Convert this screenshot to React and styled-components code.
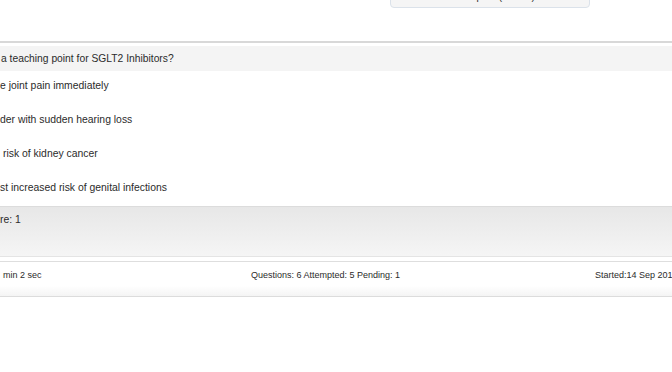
import React from "react";
import styled, { createGlobalStyle } from "styled-components";

const Global = createGlobalStyle`
  html, body { margin: 0; padding: 0; background: #fff; }
  body { font-family: "Liberation Sans", Arial, sans-serif; color: #2b2b2b; }
`;

const Page = styled.div`
  width: 672px;
  height: 372px;
  overflow: hidden;
  background: #fff;
`;

const TopArea = styled.div`
  display: flex;
  align-items: flex-start;
  height: 41px;
  border-bottom: 2px solid #d8d8d8;
  box-sizing: content-box;
`;

const TimerBox = styled.div`
  margin: -14px 0 0 390px;
  width: 198px;
  padding: 4px 0;
  background: #f5f5f5;
  border: 1px solid #dbe2ea;
  border-radius: 4px;
  font-size: 10px;
  line-height: 12px;
  text-align: center;
`;

const QuestionBar = styled.div`
  margin-top: 3px;
  height: 25px;
  background: #f4f4f4;
  display: flex;
  align-items: center;
  padding-left: 1px;
  font-size: 10.3px;
  line-height: 12px;
`;

const OptionList = styled.div`
  display: flex;
  flex-direction: column;
`;

const Option = styled.div`
  height: 34px;
  box-sizing: border-box;
  padding: 9px 0 13px ${(p) => p.$indent || 0}px;
  font-size: 10.4px;
  line-height: 12px;
  white-space: nowrap;
`;

const ScorePanel = styled.div`
  height: 42px;
  border-top: 1px solid #dcdcdc;
  border-bottom: 1px solid #e4e4e4;
  background: linear-gradient(#e7e7e7, #f5f5f5);
  padding: 7px 0 0 0;
  box-sizing: content-box;
  font-size: 10.4px;
  line-height: 12px;
  margin-top: -1px;
`;

const Footer = styled.div`
  margin-top: 4px;
  height: 36px;
  border-top: 1px solid #dedede;
  border-bottom: 1px solid #dcdcdc;
  background: linear-gradient(#fff 0%, #fff 70%, #f4f4f4 100%);
  display: grid;
  grid-template-columns: 248px 344px 1fr;
  align-items: start;
  padding: 8px 0 0 3px;
  box-sizing: border-box;
  font-size: 9px;
  line-height: 11px;
  white-space: nowrap;
`;

const FooterCell = styled.div`
  overflow: visible;
`;

export default function App() {
  const options = [
    { text: "e joint pain immediately", indent: 0 },
    { text: "der with sudden hearing loss", indent: 0 },
    { text: "risk of kidney cancer", indent: 3 },
    { text: "st increased risk of genital infections", indent: 0 },
  ];
  return (
    <Page>
      <Global />
      <TopArea>
        <TimerBox>Time Spent (mm:ss)</TimerBox>
      </TopArea>
      <QuestionBar>a teaching point for SGLT2 Inhibitors?</QuestionBar>
      <OptionList>
        {options.map((o) => (
          <Option key={o.text} $indent={o.indent}>
            {o.text}
          </Option>
        ))}
      </OptionList>
      <ScorePanel>re: 1</ScorePanel>
      <Footer>
        <FooterCell>min 2 sec</FooterCell>
        <FooterCell>Questions: 6 Attempted: 5 Pending: 1</FooterCell>
        <FooterCell>Started:14 Sep 2017</FooterCell>
      </Footer>
    </Page>
  );
}
